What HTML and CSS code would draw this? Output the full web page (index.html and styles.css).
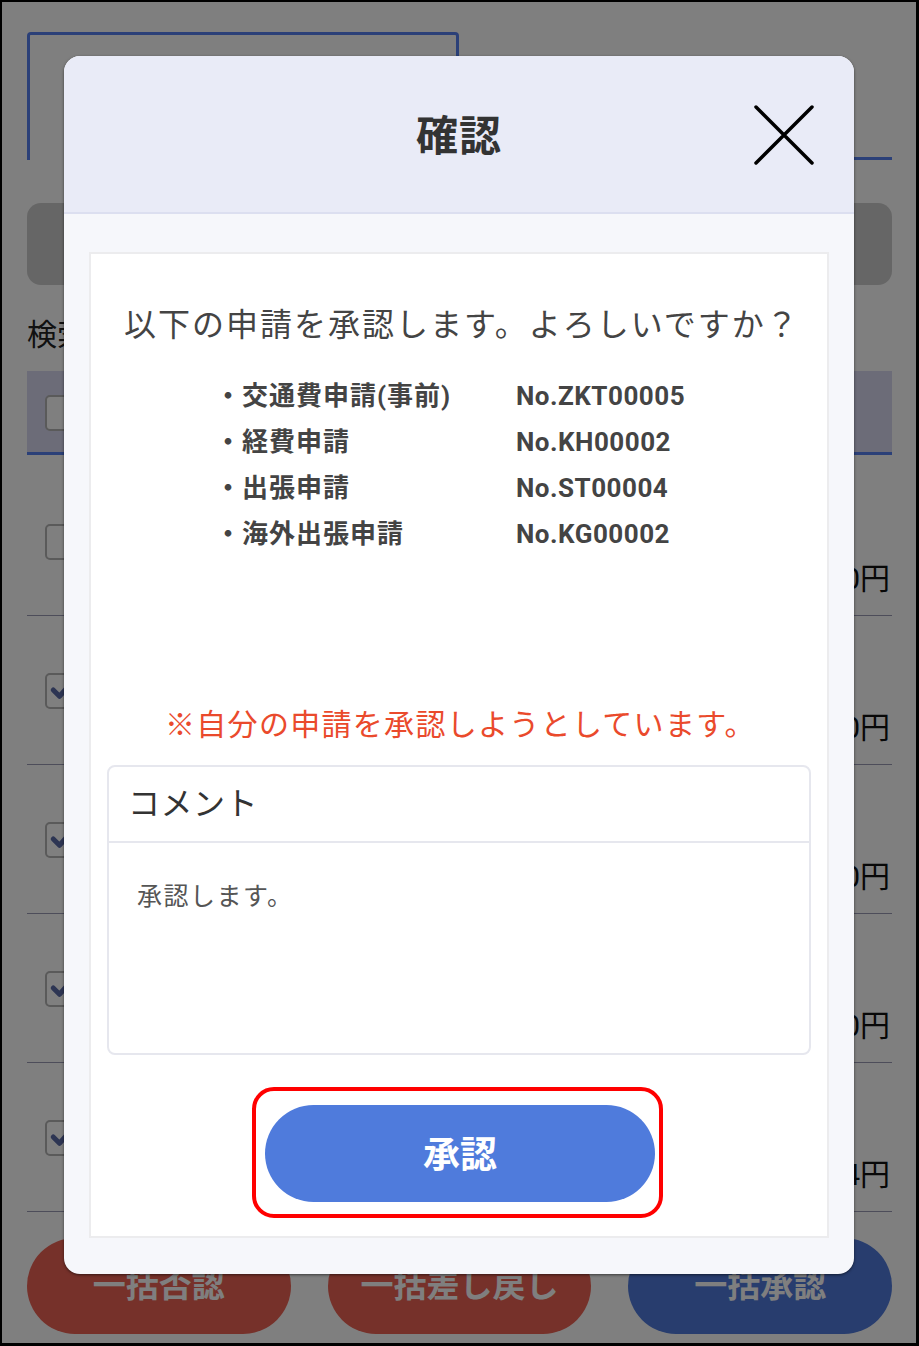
FILE: index.html
```html
<!DOCTYPE html>
<html lang="ja">
<head>
<meta charset="utf-8">
<title>確認</title>
<link rel="stylesheet" href="styles.css">
</head>
<body>
<div class="frame">
  <div class="app">
    <div class="tabs">
      <div class="tab tab-active"></div>
      <div class="tab tab-rest"></div>
    </div>
    <div class="search-box"></div>
    <div class="section-label">検索</div>
    <div class="table">
      <div class="table-head"><span class="cb"></span></div>
      <div class="row row-first"><span class="cb"></span><span class="amount">12,000円</span></div>
      <div class="row"><span class="cb cb-on"><svg viewBox="0 0 24 24"><path d="M5 12l5 5 9-10"/></svg></span><span class="amount">3,500円</span></div>
      <div class="row"><span class="cb cb-on"><svg viewBox="0 0 24 24"><path d="M5 12l5 5 9-10"/></svg></span><span class="amount">8,000円</span></div>
      <div class="row"><span class="cb cb-on"><svg viewBox="0 0 24 24"><path d="M5 12l5 5 9-10"/></svg></span><span class="amount">25,000円</span></div>
      <div class="row"><span class="cb cb-on"><svg viewBox="0 0 24 24"><path d="M5 12l5 5 9-10"/></svg></span><span class="amount">1,234円</span></div>
    </div>
    <div class="bulk-actions">
      <div class="bulk bulk-red">一括否認</div>
      <div class="bulk bulk-red">一括差し戻し</div>
      <div class="bulk bulk-blue">一括承認</div>
    </div>
  </div>
  <div class="overlay"></div>
  <div class="modal">
    <div class="modal-head">
      <span></span>
      <h1 class="modal-title">確認</h1>
      <button class="close" aria-label="閉じる"><svg viewBox="0 0 60 60"><path d="M2 2L58 58M58 2L2 58"/></svg></button>
    </div>
    <div class="modal-body">
      <div class="panel">
        <p class="question">以下の申請を承認します。よろしいですか？</p>
        <div class="req-list">
          <span class="req-name">・交通費申請(事前)</span><span class="req-no">No.ZKT00005</span>
          <span class="req-name">・経費申請</span><span class="req-no">No.KH00002</span>
          <span class="req-name">・出張申請</span><span class="req-no">No.ST00004</span>
          <span class="req-name">・海外出張申請</span><span class="req-no">No.KG00002</span>
        </div>
        <p class="warning">※自分の申請を承認しようとしています。</p>
        <div class="comment">
          <div class="comment-head">コメント</div>
          <div class="comment-body">承認します。</div>
        </div>
        <div class="highlight">
          <button class="approve">承認</button>
        </div>
      </div>
    </div>
  </div>
</div>
</body>
</html>
```

FILE: styles.css
```css
* { box-sizing: border-box; }
html, body { margin: 0; padding: 0; }
body {
  font-family: Roboto, "Noto Sans CJK JP", sans-serif;
  background: #000;
}
.frame {
  position: relative;
  width: 919px;
  height: 1346px;
  border-style: solid;
  border-color: #000;
  border-width: 2px 3px 3px 2px;
  background: #fff;
  overflow: hidden;
}
.app {
  padding: 30px 24px 0 25px;
  color: #222;
}
.tabs {
  display: flex;
  height: 128px;
}
.tab-active {
  width: 432px;
  border: 3px solid #5680f0;
  border-bottom: none;
  border-radius: 4px 4px 0 0;
}
.tab-rest {
  flex: 1;
  border-bottom: 3px solid #5680f0;
}
.search-box {
  margin-top: 43px;
  height: 82px;
  background: #cdcdcd;
  border-radius: 14px;
}
.section-label {
  margin-top: 28px;
  line-height: 44px;
  font-size: 30px;
}
.table { margin-top: 14px; }
.table-head {
  height: 84px;
  background: #d8d8f0;
  border-bottom: 3px solid #5680f0;
  padding: 24px 18px;
}
.cb {
  display: block;
  width: 34px;
  height: 36px;
  border: 2px solid #b4b4b4;
  border-radius: 5px;
  background: #fff;
}
.cb svg {
  width: 30px;
  height: 30px;
  fill: none;
  stroke: #5a6aa6;
  stroke-width: 4;
  stroke-linecap: round;
  stroke-linejoin: round;
}
.row {
  position: relative;
  height: 149px;
  border-bottom: 1px solid #9a9ab4;
  padding: 57px 18px 0;
}
.row-first {
  height: 161px;
  padding-top: 69px;
}
.amount {
  position: absolute;
  right: 2px;
  bottom: 16px;
  font-size: 30px;
  line-height: 40px;
  color: #111;
}
.bulk-actions {
  margin-top: 26px;
  display: grid;
  grid-template-columns: 1fr 1fr 1fr;
  gap: 37px;
}
.bulk {
  height: 96px;
  border-radius: 48px;
  display: flex;
  align-items: center;
  justify-content: center;
  font-size: 33px;
  font-weight: 700;
  color: #fff;
  padding-bottom: 6px;
}
.bulk-red { background: #ec6254; }
.bulk-blue { background: #507adc; }

.overlay {
  position: absolute;
  inset: 0;
  background: rgba(0, 0, 0, 0.5);
}
.modal {
  position: absolute;
  left: 62px;
  top: 54px;
  width: 790px;
  height: 1218px;
  border-radius: 16px;
  background: #f6f7fb;
  overflow: hidden;
  box-shadow: 0 1px 3px rgba(0, 0, 0, 0.55);
  display: flex;
  flex-direction: column;
}
.modal-head {
  height: 158px;
  background: #e9ebf7;
  border-bottom: 2px solid #dcdff0;
  display: grid;
  grid-template-columns: 1fr auto 1fr;
  align-items: center;
}
.modal-title {
  margin: 0;
  font-size: 42px;
  font-weight: 700;
  letter-spacing: 1px;
  color: #333;
  padding-bottom: 4px;
}
.close {
  justify-self: end;
  margin-right: 40px;
  margin-top: 2px;
  width: 60px;
  height: 60px;
  padding: 0;
  border: none;
  background: none;
}
.close svg {
  width: 60px;
  height: 60px;
  stroke: #000;
  stroke-width: 3.5;
  stroke-linecap: round;
  display: block;
}
.modal-body {
  flex: 1;
  padding: 38px 25px 36px;
  display: flex;
}
.panel {
  flex: 1;
  background: #fff;
  border: 2px solid #ececee;
  padding: 47px 0 18px;
  display: flex;
  flex-direction: column;
}
.question {
  margin: 0;
  padding-left: 33px;
  font-size: 32px;
  line-height: 48px;
  letter-spacing: 2px;
  color: #444;
}
.req-list {
  margin-top: 24px;
  padding-left: 124px;
  display: grid;
  grid-template-columns: 301px auto;
  font-size: 26px;
  font-weight: 700;
  line-height: 46px;
  letter-spacing: 0.5px;
  color: #444;
}
.req-name { letter-spacing: 1px; }
.warning {
  margin: 146px 0 0;
  padding-left: 74px;
  font-size: 30px;
  line-height: 44px;
  letter-spacing: 1.3px;
  color: #ea4a2c;
}
.comment {
  margin: 18px 16px 0;
  height: 290px;
  border: 2px solid #e6e7ee;
  border-radius: 8px;
  display: flex;
  flex-direction: column;
}
.comment-head {
  height: 76px;
  border-bottom: 2px solid #e6e7ee;
  padding: 0 19px 6px;
  display: flex;
  align-items: center;
  font-size: 32px;
  letter-spacing: 0.5px;
  color: #333;
}
.comment-body {
  padding: 36px 28px;
  font-size: 25px;
  line-height: 36px;
  letter-spacing: 1.5px;
  color: #555;
}
.highlight {
  margin: 32px 0 0 161px;
  width: 411px;
  border: 4px solid #ff0000;
  border-radius: 22px;
  padding: 14px 4px 12px 9px;
}
.approve {
  display: flex;
  align-items: center;
  justify-content: center;
  width: 390px;
  height: 97px;
  border: none;
  border-radius: 49px;
  background: #4f7bdc;
  color: #fff;
  font-family: Roboto, "Noto Sans CJK JP", sans-serif;
  font-size: 37px;
  font-weight: 700;
  padding: 0 0 4px;
}
```
